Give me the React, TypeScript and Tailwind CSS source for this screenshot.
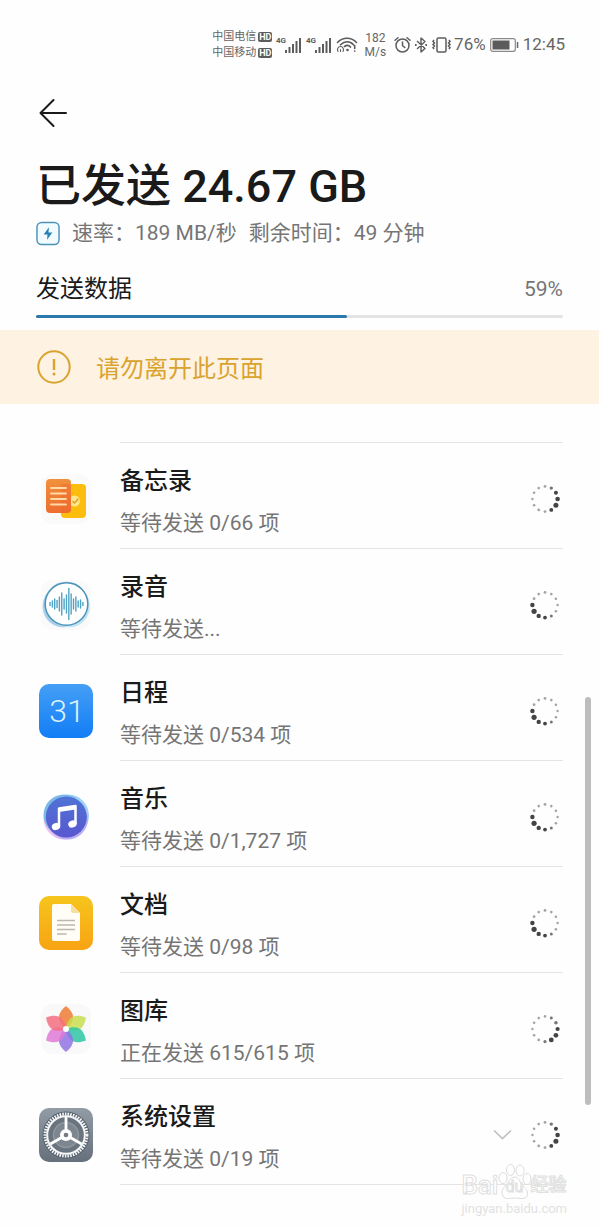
import type { ReactNode } from 'react';

type SpinnerPhase = 'right' | 'lower' | 'left';

interface TransferItem {
  name: string;
  status: string;
  icon: ReactNode;
  phase: SpinnerPhase;
  expandable?: boolean;
}

function SignalIcon() {
  return (
    <svg width="26" height="20" viewBox="0 0 26 20" fill="#5c5c5c">
      <text x="0" y="8" fontSize="8" fontWeight="700" fontFamily="Roboto, sans-serif">4G</text>
      <rect x="9" y="15" width="2" height="3" />
      <rect x="12.5" y="12" width="2" height="6" />
      <rect x="16" y="9" width="2" height="9" />
      <rect x="19.5" y="6" width="2" height="12" />
      <rect x="23" y="3" width="2" height="15" />
    </svg>
  );
}

function WifiIcon() {
  return (
    <svg width="22" height="18" viewBox="0 0 22 18" fill="none" stroke="#5c5c5c" strokeWidth="1.6" strokeLinecap="round">
      <path d="M1.5 6.5C6.5 .8 15.5 .8 20.5 6.5" />
      <path d="M4.5 8.8C8.5 4.8 14 4.8 17.5 8.8" />
      <path d="M8.5 10.5c2-1.5 4.5-1.2 6 .6" />
      <circle cx="11.5" cy="14" r="1.3" fill="#5c5c5c" stroke="none" />
      <path d="M18.7 9.5v3M18.7 15v.2" />
      <path d="M2 15.5c-1.3-2.2 0-5 2.5-5s3.8 2.8 2.5 5M4.5 13.5v2" strokeWidth="1.1" />
    </svg>
  );
}

function AlarmIcon() {
  return (
    <svg width="17" height="18" viewBox="0 0 17 18" fill="none" stroke="#5c5c5c" strokeWidth="1.5" strokeLinecap="round">
      <circle cx="8.5" cy="9.5" r="6.5" />
      <path d="M8.5 6v3.7l2.3 1.8M1 4.3 4 1.7M16 4.3 13 1.7" />
    </svg>
  );
}

function BluetoothIcon() {
  return (
    <svg width="14" height="18" viewBox="0 0 14 18" fill="none" stroke="#5c5c5c" strokeWidth="1.4" strokeLinejoin="round">
      <path d="M3 5l8 7.5L7 16V2l4 3.5L3 13" />
      <path d="M1 9h1.6M11.4 9H13" strokeWidth="1.8" />
    </svg>
  );
}

function VibrateIcon() {
  return (
    <svg width="21" height="18" viewBox="0 0 21 18" fill="none" stroke="#5c5c5c" strokeWidth="1.5">
      <rect x="6" y="2" width="9" height="14" rx="1.5" />
      <path d="M3 4 2 5.5l1.5 1.5L2 8.500 3.500 10 2 11.500l1 1.500M18 4l1 1.500L17.500 7 19 8.500 17.500 10l1.500 1.500-1 1.500" />
    </svg>
  );
}

function BatteryIcon() {
  return (
    <svg width="29" height="14" viewBox="0 0 29 14">
      <rect x=".7" y=".7" width="24.6" height="12.6" rx="2" fill="none" stroke="#8a8a8a" strokeWidth="1.2" />
      <rect x="2.5" y="2.5" width="17" height="9" fill="#5c5c5c" />
      <rect x="26.8" y="4" width="1.5" height="6" fill="#6c6c6c" />
    </svg>
  );
}

function Carrier({ name }: { name: string }) {
  return (
    <div className="flex items-center gap-0.5 text-[11px] leading-4">
      <span>{name}</span>
      <span className="rounded-[2px] bg-[#5c5c5c] px-px text-[9px] leading-[10px] font-bold text-white">HD</span>
    </div>
  );
}

function StatusBar() {
  return (
    <div className="flex h-[90px] items-center justify-end pr-[34px] text-[#666]">
      <div className="mr-1">
        <Carrier name="中国电信" />
        <Carrier name="中国移动" />
      </div>
      <div className="mr-1 flex gap-1">
        <SignalIcon />
        <SignalIcon />
      </div>
      <WifiIcon />
      <div className="mr-2 ml-1.5 text-center text-xs leading-[14px]">
        <div>182</div>
        <div>M/s</div>
      </div>
      <div className="flex items-center gap-[3px]">
        <AlarmIcon />
        <BluetoothIcon />
        <VibrateIcon />
      </div>
      <span className="mr-1 ml-0.5 text-[17px]">76%</span>
      <BatteryIcon />
      <span className="ml-1 text-[17px]">12:45</span>
    </div>
  );
}

function NotesIcon() {
  return (
    <svg viewBox="0 0 60 60" className="size-full">
      <defs>
        <linearGradient id="notes-front" x1="0" y1="0" x2="0" y2="1">
          <stop offset="0" stopColor="#f0913c" />
          <stop offset="1" stopColor="#ee6d2f" />
        </linearGradient>
      </defs>
      <rect x="5" y="5" width="50" height="50" rx="12" fill="#fafafa" />
      <rect x="25" y="15" width="25" height="34" rx="4" fill="#fcbd0c" />
      <circle cx="38.5" cy="32" r="5.5" fill="#ffe68a" />
      <rect x="10" y="10" width="25" height="34" rx="4" fill="url(#notes-front)" />
      <path d="M25 15h6a4 4 0 0 1 4 4v21a4 4 0 0 1-4 4h-6z" fill="#f0602a" opacity=".35" />
      <path d="M36.5 32l2 2 4-4.5" fill="none" stroke="#e39a1c" strokeWidth="1.3" />
      <path d="M15 19h15M15 24.5h15M15 30h15M15 35.5h15" stroke="#ffd9a8" strokeWidth="1.8" strokeLinecap="round" />
    </svg>
  );
}

function RecorderIcon() {
  // half heights of the wave form bars
  const bars = [1.5, 3, 5, 3.5, 7, 11, 5, 9, 15.5, 10, 5, 7, 3, 4, 1.5];
  return (
    <svg viewBox="0 0 60 60" className="size-full">
      <rect x="5" y="5" width="50" height="50" rx="12" fill="#fafafa" />
      <ellipse cx="29" cy="29.5" rx="23.5" ry="21.5" fill="#a9cfea" transform="rotate(-50 29 29.5)" />
      <ellipse cx="31.5" cy="29.5" rx="23.5" ry="21.5" fill="#c3e5f3" transform="rotate(50 31.5 29.5)" />
      <circle cx="30.5" cy="29" r="21.3" fill="#fff" stroke="#4c94b8" strokeWidth="1.5" />
      {bars.map((h, i) => (
        <line
          key={i}
          x1={14 + i * 2.35}
          x2={14 + i * 2.35}
          y1={29 - h}
          y2={29 + h}
          stroke="#4fa3c4"
          strokeWidth="1.4"
          strokeLinecap="round"
        />
      ))}
    </svg>
  );
}

function CalendarIcon() {
  return (
    <svg viewBox="0 0 60 60" className="size-full">
      <defs>
        <linearGradient id="calendar-bg" x1="0" y1="0" x2="0" y2="1">
          <stop offset="0" stopColor="#459ff5" />
          <stop offset="1" stopColor="#127df6" />
        </linearGradient>
      </defs>
      <rect x="3" y="3" width="54" height="54" rx="10" fill="url(#calendar-bg)" />
      <text x="31" y="41" textAnchor="middle" fontSize="32" fontWeight="300" fontFamily="Roboto, sans-serif" fill="#d9f2ff">31</text>
    </svg>
  );
}

function MusicIcon() {
  return (
    <svg viewBox="0 0 60 60" className="size-full">
      <defs>
        <linearGradient id="music-bg" x1="0" y1="0" x2="0" y2="1">
          <stop offset="0" stopColor="#4f73d6" />
          <stop offset="1" stopColor="#5957cf" />
        </linearGradient>
      </defs>
      <circle cx="28.5" cy="31.5" r="21" fill="#ecc0f7" />
      <circle cx="32" cy="28.5" r="21" fill="#9fd2f4" />
      <circle cx="28" cy="28" r="20.5" fill="#7db9e8" />
      <circle cx="31.5" cy="32" r="20.5" fill="#b9aef3" />
      <circle cx="30.3" cy="30" r="20.5" fill="url(#music-bg)" />
      <path d="M23 39V21.5L39.5 19v18" fill="none" stroke="#fff" strokeWidth="2.5" strokeLinejoin="round" />
      <path d="M23 21l16.5-2.5v4L23 25z" fill="#fff" />
      <ellipse cx="20" cy="39.5" rx="4.3" ry="3.5" fill="#fff" transform="rotate(-20 20 39.5)" />
      <ellipse cx="36.5" cy="37" rx="4.3" ry="3.5" fill="#fff" transform="rotate(-20 36.5 37)" />
    </svg>
  );
}

function DocumentsIcon() {
  return (
    <svg viewBox="0 0 60 60" className="size-full">
      <defs>
        <linearGradient id="documents-bg" x1="0" y1="0" x2="0" y2="1">
          <stop offset="0" stopColor="#f6c51c" />
          <stop offset="1" stopColor="#f8a313" />
        </linearGradient>
      </defs>
      <rect x="3" y="3" width="54" height="54" rx="10" fill="url(#documents-bg)" />
      <path d="M18 11h17l9 9v26a2 2 0 0 1-2 2H18a2 2 0 0 1-2-2V13a2 2 0 0 1 2-2z" fill="#fffdf5" />
      <path d="M35 11v7a2 2 0 0 0 2 2h7z" fill="#f6dfa2" />
      <path d="M21 27.5h18M21 32h18M21 36.5h18M21 41h9.5" stroke="#b9b8ae" strokeWidth="1.5" />
    </svg>
  );
}

function GalleryIcon() {
  const petals = ['#ee7d33', '#c9de4d', '#2fc7a6', '#8f74e2', '#df7ad6', '#f4707f'];
  return (
    <svg viewBox="0 0 60 60" className="size-full">
      <rect x="5" y="5" width="50" height="50" rx="12" fill="#f9f9fa" />
      {petals.map((color, i) => (
        <path
          key={color}
          d="M30 30C20 22.5 21 14 30 7c9 7 10 15.5 0 23z"
          fill={color}
          opacity=".85"
          transform={`rotate(${i * 60} 30 30)`}
        />
      ))}
      <circle cx="30" cy="30" r="3" fill="#fff" />
    </svg>
  );
}

function SettingsIcon() {
  return (
    <svg viewBox="0 0 60 60" className="size-full">
      <defs>
        <linearGradient id="settings-bg" x1="0" y1="0" x2="0" y2="1">
          <stop offset="0" stopColor="#929ca7" />
          <stop offset="1" stopColor="#66707c" />
        </linearGradient>
      </defs>
      <rect x="3" y="3" width="54" height="54" rx="10" fill="url(#settings-bg)" />
      <circle cx="30" cy="30" r="23.5" fill="#57616c" />
      <circle cx="30" cy="30" r="21" fill="none" stroke="#f4f6f7" strokeWidth="3" strokeDasharray="1.6 1.1" />
      <circle cx="30" cy="30" r="18.8" fill="#6a747f" stroke="#f4f6f7" strokeWidth="2" />
      <circle cx="30" cy="30" r="12.5" fill="#7d868f" stroke="#8e969e" strokeWidth="1.5" />
      <path d="M30 30V12M30 30l15.6 9M30 30l-15.6 9" stroke="#fff" strokeWidth="2.8" />
      <circle cx="30" cy="30" r="6" fill="#fff" />
      <circle cx="30" cy="30" r="2.3" fill="#747a80" />
    </svg>
  );
}

// Dot radii clockwise from 12 o'clock
const DOTS: Record<SpinnerPhase, number[]> = {
  right: [1.4, 1.7, 2, 2.3, 2.5, 1.9, 1.4, 1.4, 1.3, 1.2, 1.3, 1.3],
  lower: [1.3, 1.5, 1.8, 2.1, 2.4, 2.4, 1.6, 1.4, 1.3, 1.2, 1.3, 1.3],
  left: [1.4, 1.3, 1.3, 1.2, 1.3, 1.5, 1.9, 2.2, 2.6, 2.2, 1.4, 1.3],
};

function Spinner({ phase }: { phase: SpinnerPhase }) {
  return (
    <svg viewBox="0 0 36 36" className="size-9 shrink-0" role="img" aria-label="等待">
      {DOTS[phase].map((r, i) => {
        const angle = (i * Math.PI) / 6;
        return (
          <circle
            key={i}
            cx={18 + 12.6 * Math.sin(angle)}
            cy={18 - 12.6 * Math.cos(angle)}
            r={r}
            fill={r > 1.8 ? '#444' : r > 1.45 ? '#777' : '#a3a3a3'}
          />
        );
      })}
    </svg>
  );
}

const ITEMS: TransferItem[] = [
  { name: '备忘录', status: '等待发送 0/66 项', icon: <NotesIcon />, phase: 'right' },
  { name: '录音', status: '等待发送...', icon: <RecorderIcon />, phase: 'left' },
  { name: '日程', status: '等待发送 0/534 项', icon: <CalendarIcon />, phase: 'left' },
  { name: '音乐', status: '等待发送 0/1,727 项', icon: <MusicIcon />, phase: 'left' },
  { name: '文档', status: '等待发送 0/98 项', icon: <DocumentsIcon />, phase: 'left' },
  { name: '图库', status: '正在发送 615/615 项', icon: <GalleryIcon />, phase: 'lower' },
  { name: '系统设置', status: '等待发送 0/19 项', icon: <SettingsIcon />, phase: 'right', expandable: true },
];

function TransferRow({ item }: { item: TransferItem }) {
  return (
    <li className="flex h-[106px] gap-6">
      <div className="flex w-[60px] shrink-0 items-center pt-1.5">
        <div className="size-[60px]">{item.icon}</div>
      </div>
      <div className="flex flex-1 items-center border-b border-[#e4e4e4] pt-1.5">
        <div className="flex-1 pt-1.5">
          <h3 className="text-2xl leading-8 font-medium text-[#1a1a1a]">{item.name}</h3>
          <p className="mt-2.5 text-[21px] leading-8 text-[#757575]">{item.status}</p>
        </div>
        {item.expandable && (
          <button aria-label="展开" className="mr-3">
            <svg width="24" height="24" viewBox="0 0 24 24" fill="none" stroke="#c2c2c2" strokeWidth="1.7">
              <path d="M3 7.500l8.500 8 8.500-8" />
            </svg>
          </button>
        )}
        <Spinner phase={item.phase} />
      </div>
    </li>
  );
}

function Watermark() {
  return (
    <div className="absolute right-8 bottom-3 text-[#e2e2e2]">
      <div className="flex items-end font-medium text-white [-webkit-text-stroke:1px_#e0e0e0]">
        <span className="text-[26px] leading-8">Bai</span>
        <div className="relative flex w-8 justify-center">
          <svg width="34" height="38" viewBox="0 0 34 38" className="absolute bottom-0" fill="#fff" stroke="#dcdcdc">
            <ellipse cx="5" cy="15" rx="4" ry="5.5" />
            <ellipse cx="12.5" cy="7" rx="4" ry="5.5" />
            <ellipse cx="22" cy="7.5" rx="4" ry="5.5" />
            <ellipse cx="29" cy="16" rx="4" ry="5.5" />
            <path d="M17 14c-5 0-6 5-9 8-4 4-5 7-3 11s8 2 12 2 10 2 12-2-1-7-4-10-4-9-8-9z" />
          </svg>
          <span className="relative text-base leading-7 font-normal">du</span>
        </div>
        <span className="text-lg leading-8">经验</span>
      </div>
      <div className="text-[13px] leading-4">jingyan.baidu.com</div>
    </div>
  );
}

export default function App() {
  const progress = 59;

  return (
    <div className="relative min-h-screen bg-[#fefefe] font-['Roboto','Noto_Sans_CJK_SC',sans-serif]">
      <StatusBar />

      <header className="px-9">
        <button aria-label="返回" className="block">
          <svg width="34" height="46" viewBox="0 0 34 46" fill="none" stroke="#1a1a1a" strokeWidth="2" strokeLinecap="round" strokeLinejoin="round">
            <path d="M30 23H5M17.5 10 4.5 23l13 13" />
          </svg>
        </button>

        <h1 className="mt-6 text-[45px] leading-[54px] font-medium text-[#1a1a1a]">已发送 24.67 GB</h1>

        <div className="mt-[3px] flex items-center text-[21px] leading-8 text-[#757575]">
          <svg width="24" height="25" viewBox="0 0 25 25" className="mr-3 shrink-0">
            <rect x="1" y="1" width="23" height="23" rx="5" fill="#f2fbff" stroke="#4a92b8" strokeWidth="1.5" />
            <path d="M13.5 6L8 13.5h4L11.5 19l5.5-7.5h-4z" fill="#2680b0" />
          </svg>
          <span className="mr-3">速率：189 MB/秒</span>
          <span>剩余时间：49 分钟</span>
        </div>

        <div className="mt-6 flex items-center justify-between">
          <h2 className="text-2xl leading-8 text-[#1a1a1a]">发送数据</h2>
          <span className="text-[21px] leading-8 text-[#757575]">{progress}%</span>
        </div>
        <div
          className="mt-2.5 h-[3px] rounded-full bg-[#e4e4e4]"
          role="progressbar"
          aria-label="发送数据"
          aria-valuenow={progress}
        >
          <div className="h-full rounded-full bg-[#2b78ac]" style={{ width: `${progress}%` }} />
        </div>
      </header>

      <div className="mt-3 flex h-[74px] items-center gap-6 bg-[#fef2e3] px-9 text-[#d9a32e]">
        <svg width="36" height="36" viewBox="0 0 36 36" fill="none" stroke="currentColor" strokeWidth="2">
          <circle cx="18" cy="18" r="15.7" />
          <path d="M18 10v11" strokeWidth="2.4" />
          <circle cx="18" cy="25" r="1.5" fill="currentColor" stroke="none" />
        </svg>
        <p className="pt-1 text-2xl">请勿离开此页面</p>
      </div>

      <main className="relative px-9 pt-[38px] pb-11">
        <ul>
          <li className="ml-[84px] border-t border-[#e4e4e4]" aria-hidden="true" />
          {ITEMS.map((item) => (
            <TransferRow key={item.name} item={item} />
          ))}
        </ul>
        <div className="absolute top-[293px] right-2 bottom-[124px] w-1.5 rounded-full bg-[#bdbdbd]" />
      </main>

      <Watermark />
    </div>
  );
}
